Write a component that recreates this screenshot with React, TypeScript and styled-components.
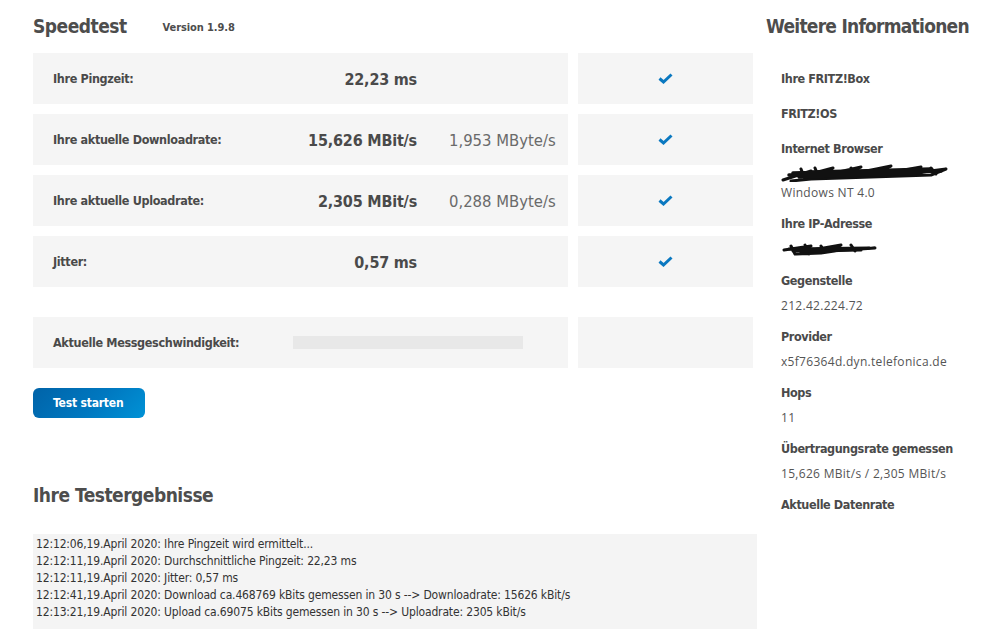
import React from "react";
import styled, { createGlobalStyle } from "styled-components";

const Global = createGlobalStyle`
  html, body { margin: 0; padding: 0; background: #fff; }
  body { font-family: "DejaVu Sans Condensed", "DejaVu Sans", sans-serif; color: #4a4a4a; }
`;

const narrow = `"DejaVu Sans Condensed", "DejaVu Sans", sans-serif`;
const plain = `"Open Sans", "Liberation Sans", sans-serif`;

const Page = styled.div`
  display: grid;
  grid-template-columns: 724px 218px;
  column-gap: 9px;
  padding-left: 33px;
  width: 984px;
  height: 629px;
  overflow: hidden;
  box-sizing: border-box;
`;

const Main = styled.div`
  display: flex;
  flex-direction: column;
`;

const TitleBar = styled.div`
  display: flex;
  align-items: center;
  height: 53px;
  gap: 36px;
  padding-bottom: 2px;
  box-sizing: border-box;
`;

const H1 = styled.h1`
  margin: 0;
  font-family: ${narrow};
  font-weight: 700;
  font-size: 19px;
  letter-spacing: -0.5px;
  color: #4d4d4d;
`;

const Version = styled.span`
  font-family: ${narrow};
  font-weight: 700;
  font-size: 11px;
  letter-spacing: -0.1px;
  color: #4d4d4d;
  padding-top: 3px;
`;

const Rows = styled.div`
  display: grid;
  grid-template-columns: 535px 175px;
  column-gap: 10px;
  row-gap: 10px;
  width: 720px;
`;

const Cell = styled.div<{ $gapTop?: boolean }>`
  background: #f5f5f5;
  height: 51px;
  display: flex;
  align-items: center;
  margin-top: ${(p) => (p.$gapTop ? "20px" : "0")};
`;

const InfoCell = styled(Cell)`
  padding-left: 20px;
  box-sizing: border-box;
`;

const Label = styled.div`
  font-family: ${narrow};
  font-weight: 700;
  font-size: 12.5px;
  letter-spacing: -0.35px;
  color: #4a4a4a;
  width: 200px;
  flex: none;
  white-space: nowrap;
`;

const Value = styled.div`
  font-family: ${narrow};
  font-weight: 700;
  font-size: 16px;
  letter-spacing: -0.2px;
  color: #4a4a4a;
  width: 164px;
  text-align: right;
  flex: none;
  padding-top: 2px;
`;

const SubValue = styled.div`
  font-family: ${narrow};
  font-weight: 400;
  font-size: 16.5px;
  color: #6a6a6a;
  margin-left: 32px;
  padding-top: 2px;
`;

const StatusCell = styled(Cell)`
  justify-content: center;
`;

const Bar = styled.div`
  width: 230px;
  height: 13px;
  background: #e8e8e8;
  margin-left: 40px;
`;

const Button = styled.button`
  margin-top: 20px;
  width: 112px;
  height: 30px;
  border: none;
  border-radius: 6px;
  background: linear-gradient(135deg, #0063a8 0%, #0078c0 55%, #0092d6 100%);
  color: #fff;
  font-family: ${narrow};
  font-weight: 700;
  font-size: 12px;
  letter-spacing: -0.2px;
  text-align: left;
  padding: 0 0 0 20px;
  cursor: pointer;
`;

const H2 = styled.h2`
  margin: 63px 0 0 0;
  font-family: ${narrow};
  font-weight: 700;
  font-size: 19px;
  letter-spacing: -0.5px;
  color: #4d4d4d;
  line-height: 28px;
`;

const Log = styled.div`
  margin-top: 25px;
  background: #f4f4f4;
  padding: 2px 0 20px 3px;
  width: 724px;
  box-sizing: border-box;
  flex: 1;
`;

const LogLine = styled.div`
  font-family: ${narrow};
  font-size: 12px;
  letter-spacing: -0.15px;
  line-height: 17px;
  color: #333;
`;

const Side = styled.aside`
  display: flex;
  flex-direction: column;
`;

const SideTitle = styled(H1)`
  height: 53px;
  display: flex;
  align-items: center;
  padding-bottom: 2px;
  box-sizing: border-box;
  white-space: nowrap;
  letter-spacing: -0.75px;
`;

const InfoList = styled.div`
  padding: 11px 0 0 15px;
  display: flex;
  flex-direction: column;
`;

const Item = styled.div`
  display: flex;
  flex-direction: column;
  padding-bottom: 6px;
`;

const ItemLabel = styled.div`
  font-family: ${narrow};
  font-weight: 700;
  font-size: 12.5px;
  letter-spacing: -0.4px;
  line-height: 29px;
  color: #4a4a4a;
  white-space: nowrap;
`;

const ItemValue = styled.div`
  font-family: ${plain};
  font-size: 12px;
  letter-spacing: 0.3px;
  line-height: 21px;
  height: 21px;
  color: #555;
  white-space: nowrap;
`;

const Scribble = styled.svg`
  display: block;
`;

const Check = () => (
  <svg width="15" height="11" viewBox="0 0 15 11">
    <polyline points="1.5,5.5 5.5,9 13.5,1.5" fill="none" stroke="#0a78c0" strokeWidth="3" strokeLinejoin="miter" />
  </svg>
);

const BrowserScribble = () => (
  <Scribble width="170" height="19" viewBox="0 0 170 19">
    <path
      d="M2 17 L30 8 L18 14 L52 5 L40 13 L80 4 L66 12 L110 3 L95 12 L140 4 L126 11 L165 6 L150 12 L120 13 L90 14 L60 15 L30 16 L10 18 M20 6 L24 16 M34 5 L38 15 M50 7 L56 14 M70 5 L74 13 M100 6 L105 12 M130 7 L134 12 M150 5 L155 11"
      fill="none"
      stroke="#111"
      strokeWidth="3"
      strokeLinejoin="round"
      strokeLinecap="round"
    />
    <path d="M8 12 L160 8 M12 10 L150 6 M20 14 L140 10 M30 9 L120 7" stroke="#111" strokeWidth="3.5" fill="none" strokeLinecap="round" />
  </Scribble>
);

const IpScribble = () => (
  <Scribble width="100" height="22" viewBox="0 0 100 22">
    <path
      d="M3 12 L30 8 L20 14 L60 7 L50 13 L94 10 L60 12 L40 15 L15 16 M10 8 L14 16 M24 7 L28 16 M40 8 L44 14 M70 7 L74 13"
      fill="none"
      stroke="#111"
      strokeWidth="3"
      strokeLinejoin="round"
      strokeLinecap="round"
    />
    <path d="M8 11 L88 10 M12 13 L80 12" stroke="#111" strokeWidth="3" fill="none" strokeLinecap="round" />
  </Scribble>
);

const results = [
  { label: "Ihre Pingzeit:", value: "22,23 ms" },
  { label: "Ihre aktuelle Downloadrate:", value: "15,626 MBit/s", sub: "1,953 MByte/s" },
  { label: "Ihre aktuelle Uploadrate:", value: "2,305 MBit/s", sub: "0,288 MByte/s" },
  { label: "Jitter:", value: "0,57 ms" },
];

const logLines = [
  "12:12:06,19.April 2020: Ihre Pingzeit wird ermittelt...",
  "12:12:11,19.April 2020: Durchschnittliche Pingzeit: 22,23 ms",
  "12:12:11,19.April 2020: Jitter: 0,57 ms",
  "12:12:41,19.April 2020: Download ca.468769 kBits gemessen in 30 s --> Downloadrate: 15626 kBit/s",
  "12:13:21,19.April 2020: Upload ca.69075 kBits gemessen in 30 s --> Uploadrate: 2305 kBit/s",
];

export default function App() {
  return (
    <>
      <Global />
      <Page>
        <Main>
          <TitleBar>
            <H1>Speedtest</H1>
            <Version>Version 1.9.8</Version>
          </TitleBar>
          <Rows>
            {results.map((r) => (
              <React.Fragment key={r.label}>
                <InfoCell>
                  <Label>{r.label}</Label>
                  <Value>{r.value}</Value>
                  {r.sub && <SubValue>{r.sub}</SubValue>}
                </InfoCell>
                <StatusCell>
                  <Check />
                </StatusCell>
              </React.Fragment>
            ))}
            <InfoCell $gapTop>
              <Label>Aktuelle Messgeschwindigkeit:</Label>
              <Bar />
            </InfoCell>
            <StatusCell $gapTop />
          </Rows>
          <div>
            <Button>Test starten</Button>
          </div>
          <H2>Ihre Testergebnisse</H2>
          <Log>
            {logLines.map((l) => (
              <LogLine key={l}>{l}</LogLine>
            ))}
          </Log>
        </Main>
        <Side>
          <SideTitle as="h2">Weitere Informationen</SideTitle>
          <InfoList>
            <Item>
              <ItemLabel>Ihre FRITZ!Box</ItemLabel>
            </Item>
            <Item>
              <ItemLabel>FRITZ!OS</ItemLabel>
            </Item>
            <Item>
              <ItemLabel>Internet Browser</ItemLabel>
              <BrowserScribble />
              <ItemValue>Windows NT 4.0</ItemValue>
            </Item>
            <Item>
              <ItemLabel>Ihre IP-Adresse</ItemLabel>
              <IpScribble />
            </Item>
            <Item>
              <ItemLabel>Gegenstelle</ItemLabel>
              <ItemValue>212.42.224.72</ItemValue>
            </Item>
            <Item>
              <ItemLabel>Provider</ItemLabel>
              <ItemValue>x5f76364d.dyn.telefonica.de</ItemValue>
            </Item>
            <Item>
              <ItemLabel>Hops</ItemLabel>
              <ItemValue>11</ItemValue>
            </Item>
            <Item>
              <ItemLabel>Übertragungsrate gemessen</ItemLabel>
              <ItemValue>15,626 MBit/s / 2,305 MBit/s</ItemValue>
            </Item>
            <Item>
              <ItemLabel>Aktuelle Datenrate</ItemLabel>
            </Item>
          </InfoList>
        </Side>
      </Page>
    </>
  );
}
